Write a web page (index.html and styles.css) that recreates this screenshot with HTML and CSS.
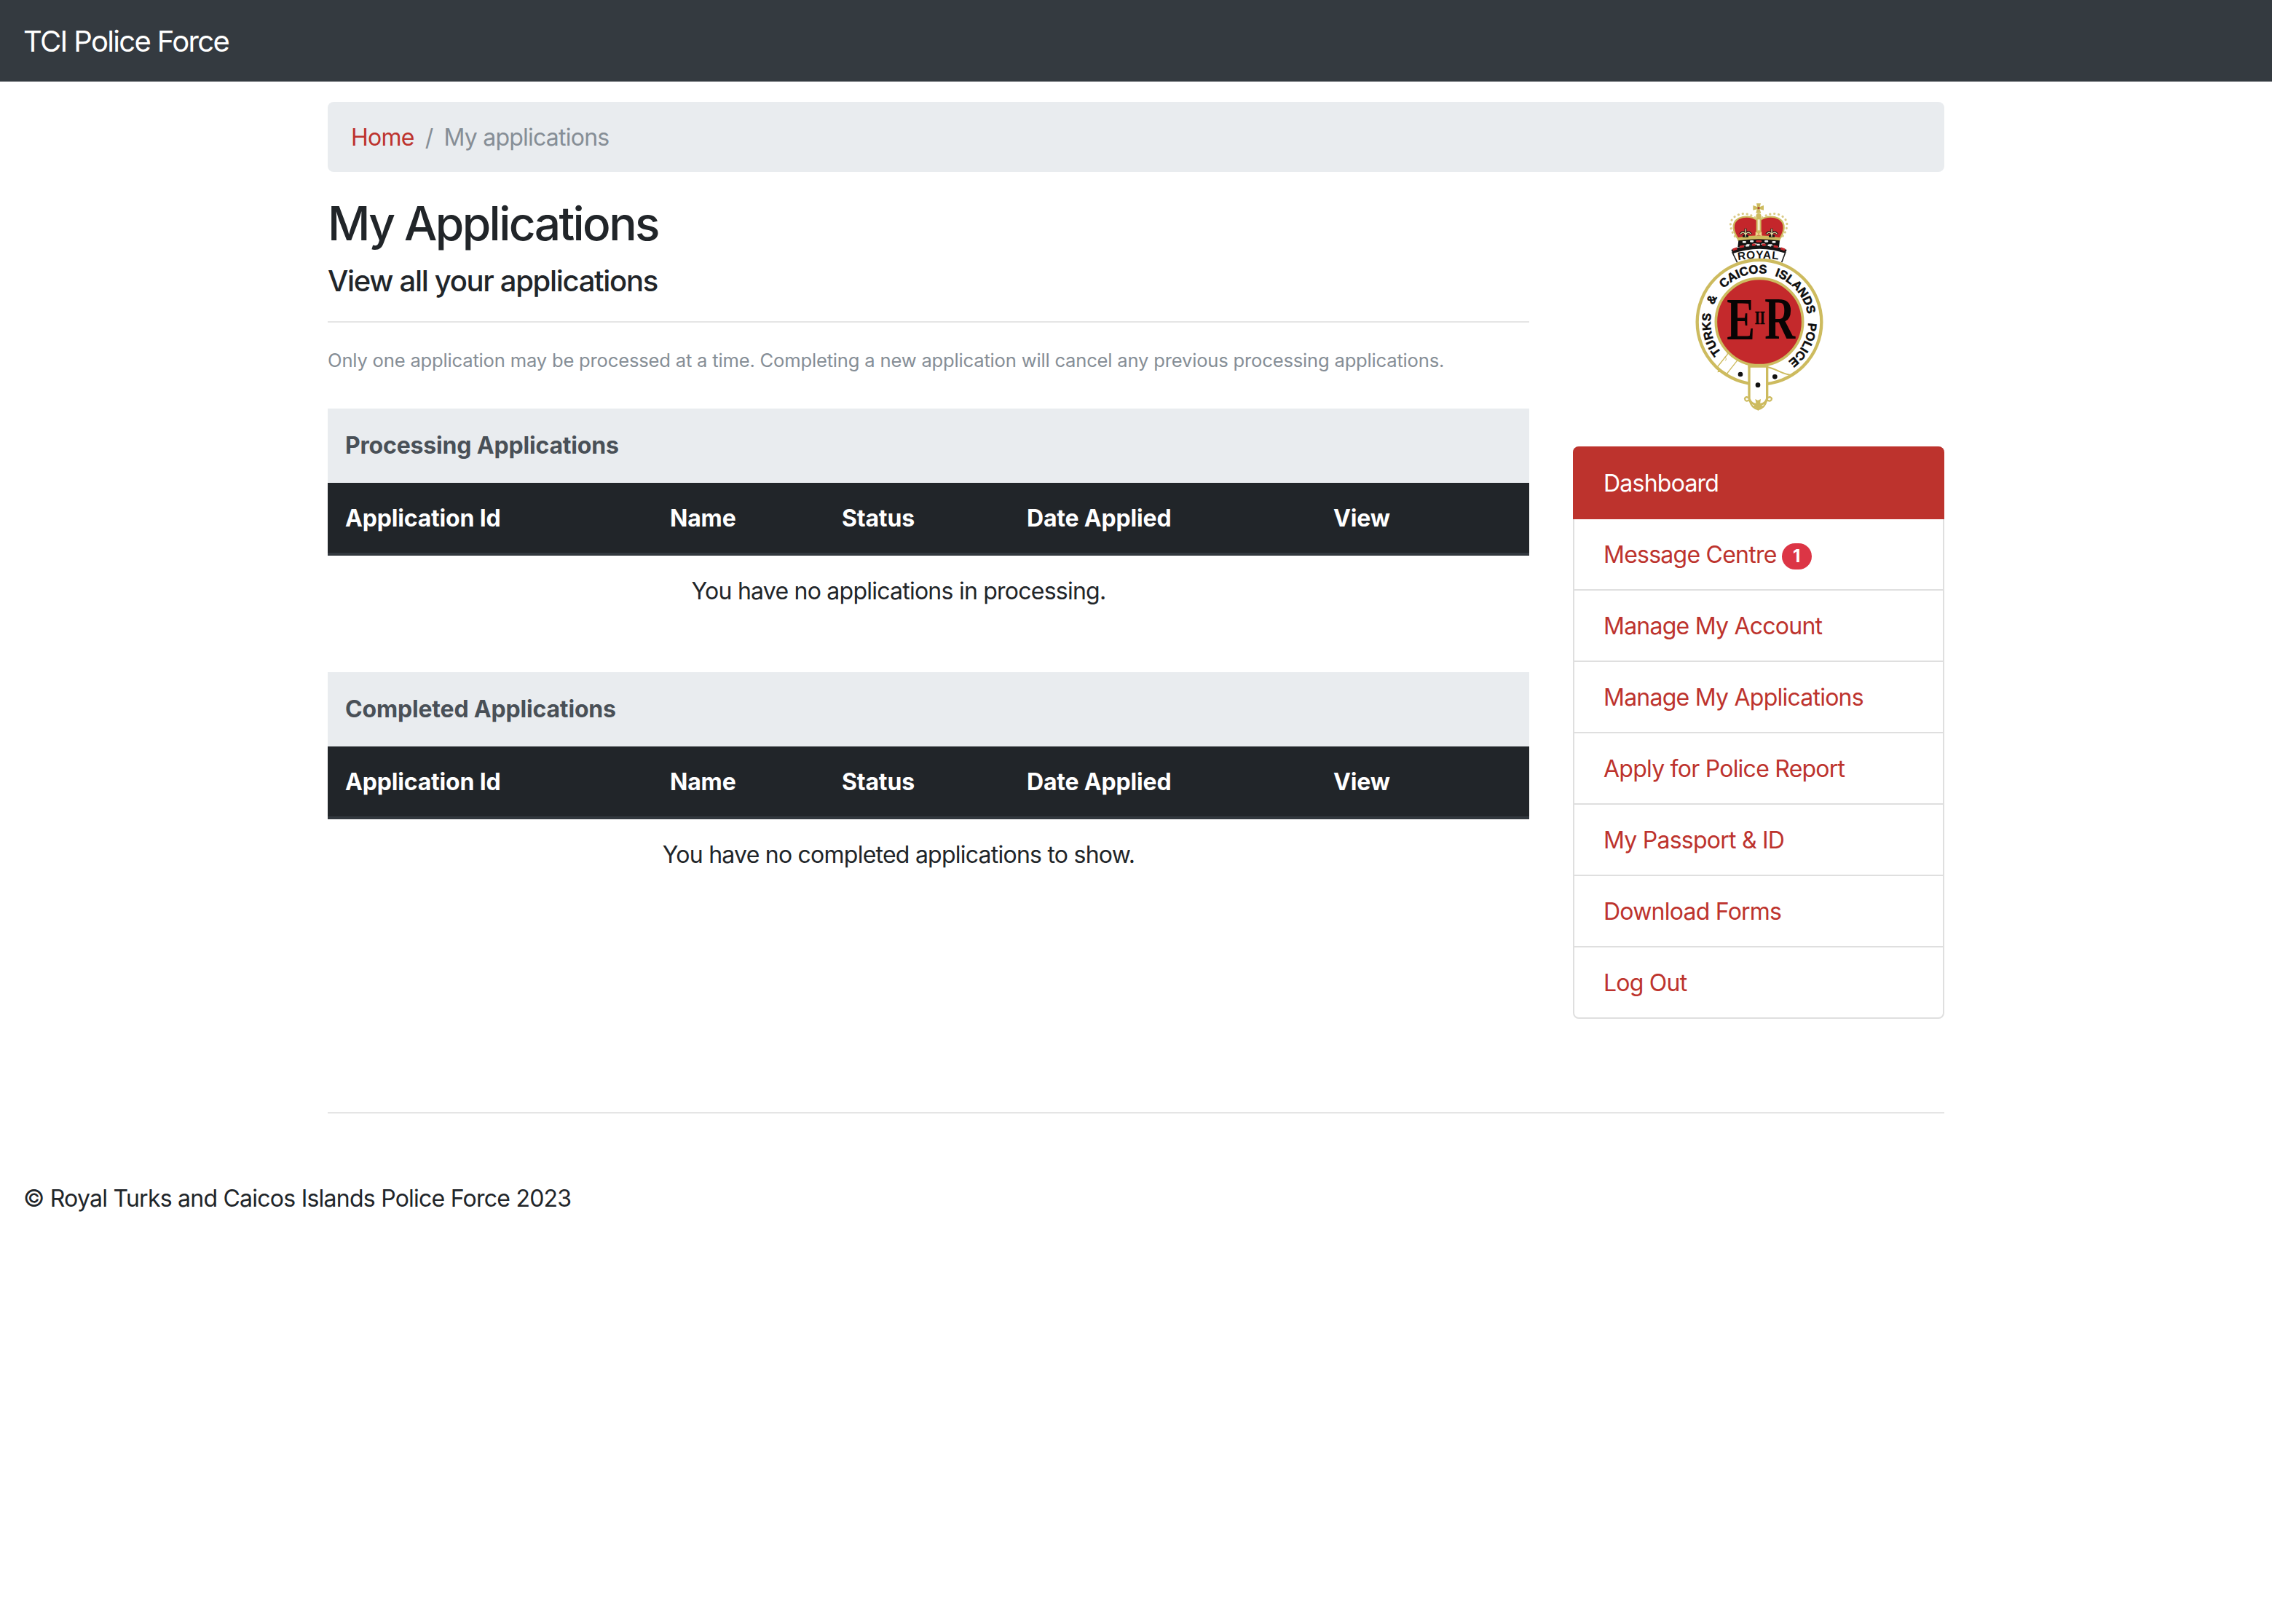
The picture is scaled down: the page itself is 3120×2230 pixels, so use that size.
FILE: index.html
```html
<!DOCTYPE html>
<html lang="en">
<head>
<meta charset="utf-8">
<title>My Applications</title>
<link rel="stylesheet" href="styles.css">
</head>
<body>
<nav class="navbar"><a class="brand">TCI Police Force</a></nav>
<div class="container">
  <ol class="breadcrumb">
    <li><a class="link">Home</a></li>
    <li class="active">My applications</li>
  </ol>
  <div class="row">
    <main class="content">
      <h1>My Applications</h1>
      <h5>View all your applications</h5>
      <hr class="rule">
      <p class="note">Only one application may be processed at a time. Completing a new application will cancel any previous processing applications.</p>
      <table class="table">
        <colgroup><col class="c-id"><col class="c-name"><col class="c-status"><col class="c-date"><col class="c-view"><col></colgroup>
        <thead>
          <tr class="caption"><th colspan="6">Processing Applications</th></tr>
          <tr class="heads"><th>Application Id</th><th>Name</th><th>Status</th><th>Date Applied</th><th>View</th><th></th></tr>
        </thead>
        <tbody><tr><td colspan="5">You have no applications in processing.</td></tr></tbody>
      </table>
      <table class="table">
        <colgroup><col class="c-id"><col class="c-name"><col class="c-status"><col class="c-date"><col class="c-view"><col></colgroup>
        <thead>
          <tr class="caption"><th colspan="6">Completed Applications</th></tr>
          <tr class="heads"><th>Application Id</th><th>Name</th><th>Status</th><th>Date Applied</th><th>View</th><th></th></tr>
        </thead>
        <tbody><tr><td colspan="5">You have no completed applications to show.</td></tr></tbody>
      </table>
    </main>
    <aside class="sidebar">
      <svg class="crest" viewBox="0 24 690 936" role="img" aria-label="Police crest">
        <defs>
          <path id="ring" d="M348 748A201 201 0 0 1 348 346A201 201 0 0 1 348 748"/>
          <path id="ribbon" d="M260 292Q348 278 440 292"/>
        </defs>
        <!-- crown -->
        <g fill="#cdbb5f">
          <path d="M336 58h18l-4 14 16-6v20l-16-4 5 16h-21l4-16-16 4V66l17 6z"/>
          <circle cx="345" cy="110" r="11"/>
        </g>
        <circle cx="345" cy="77" r="5" fill="#a8442f"/>
        <path d="M345 130Q305 102 263 120C230 138 240 178 264 209H428C452 178 460 138 427 120Q386 102 345 130Z" fill="#c4262b" stroke="#cdbb5f" stroke-width="7"/>
        <path d="M345 128Q300 88 258 106C216 126 226 164 250 198M345 128Q390 88 434 106C474 126 466 164 441 198" fill="none" stroke="#d9cb86" stroke-width="9" stroke-linecap="round" stroke-dasharray="1 17"/>
        <path d="M335 118h21v64h-21z" fill="#cdbb5f"/>
        <path d="M341 124h9v45h-9z" fill="#f3edcc"/>
        <path d="M259 199Q345 180 433 199V213Q345 196 259 213Z" fill="#cdbb5f"/>
        <g id="lily">
          <path d="M291 197V161M291 187Q282 167 269 185M291 187Q302 167 314 185M279 193H303" fill="none" stroke="#151515" stroke-width="9"/>
          <path d="M291 195V163M291 187Q282 169 270 184M291 187Q302 169 313 184" fill="none" stroke="#efe2a7" stroke-width="4"/>
        </g>
        <use href="#lily" x="108"/>
        <path d="M332 175l13 8 13-8v18l-13-6-13 6z" fill="#efd58b"/>
        <path d="M262 211Q345 200 432 211L429 238Q345 222 259 238Z" fill="#111"/>
        <g stroke-linecap="round" fill="none" stroke-width="8">
          <path d="M282 217h8M313 214h8M373 214h8M404 217h8M298 230h7M326 227h8M360 227h8M390 230h8" stroke="#eee"/>
          <path d="M338 214h16" stroke="#c4262b"/>
        </g>
        <path d="M232 249Q345 205 461 249L441 302H257Z" fill="#fff"/>
        <path d="M232 249Q345 205 461 249L455 263Q345 226 239 265Z" fill="#151515"/>
        <path d="M239 249l17-6M267 238l18-4M318 229l14-1M360 228l14 1M407 234l18 4M436 243l17 6" stroke="#c4262b" stroke-width="9"/>
        <path d="M292 233l14-2M338 228h12M383 230l14 3" stroke="#eee" stroke-width="7"/>
        <path d="M236 258L257 301M456 258L440 301" stroke="#222" stroke-width="5"/>
        <text class="crest-royal"><textPath href="#ribbon">ROYAL</textPath></text>
        <!-- garter -->
        <circle cx="348" cy="547" r="256" fill="#fff" stroke="#cdbb5f" stroke-width="13"/>
        <circle cx="348" cy="546" r="179" fill="#c4292c" stroke="#cdbb5f" stroke-width="11"/>
        <g class="crest-ring">
          <text><textPath href="#ring" startOffset="179">TURKS</textPath></text>
          <text><textPath href="#ring" startOffset="387">&amp;</textPath></text>
          <text><textPath href="#ring" startOffset="467">CAICOS</textPath></text>
          <text><textPath href="#ring" startOffset="695">ISLANDS</textPath></text>
          <text><textPath href="#ring" startOffset="949">POLICE</textPath></text>
        </g>
        <g class="crest-cypher">
          <text x="214" y="617" textLength="116" lengthAdjust="spacingAndGlyphs">E</text>
          <text x="370" y="614" textLength="126" lengthAdjust="spacingAndGlyphs">R</text>
          <text class="crest-ii" x="329" y="555" textLength="42" lengthAdjust="spacingAndGlyphs">II</text>
        </g>
        <!-- buckle and strap -->
        <g fill="none" stroke="#cdbb5f" stroke-width="4">
          <path d="M218 678L170 738M258 704L212 762M214 674Q240 680 258 704" />
          <path d="M168 738Q186 736 180 750Q198 748 206 764" stroke-width="6"/>
          <path d="M204 690q12 6 4 16" stroke-width="3"/>
          <path d="M384 733C420 740 445 765 486 766" stroke-width="6"/>
        </g>
        <path d="M306 728H380V862Q374 884 350 886H336Q312 884 306 862Z" fill="#fff" stroke="#cdbb5f" stroke-width="10"/>
        <path d="M302 727H384" stroke="#cdbb5f" stroke-width="14"/>
        <path d="M308 868Q290 878 288 862Q291 852 302 858M378 868Q397 878 399 862Q395 852 384 858M308 870Q316 902 343 906Q370 902 378 870" fill="none" stroke="#cdbb5f" stroke-width="7"/>
        <path d="M331 864l11 5 12-5-3 20 12 8-20 20-20-20 12-8z" fill="#cdbb5f"/>
        <g fill="#111"><circle cx="270" cy="762" r="10"/><circle cx="342" cy="806" r="10"/><circle cx="412" cy="772" r="10"/></g>
      </svg>
      <div class="list">
        <a class="item current">Dashboard</a>
        <a class="item">Message Centre <span class="badge">1</span></a>
        <a class="item">Manage My Account</a>
        <a class="item">Manage My Applications</a>
        <a class="item">Apply for Police Report</a>
        <a class="item">My Passport &amp; ID</a>
        <a class="item">Download Forms</a>
        <a class="item">Log Out</a>
      </div>
    </aside>
  </div>
  <hr class="rule footer-rule">
</div>
<footer class="footer">© Royal Turks and Caicos Islands Police Force 2023</footer>
</body>
</html>
```
FILE: styles.css
```css
* { box-sizing: border-box; }
body { margin: 0; background: #fff; color: #212529; font: 400 32px/48px Inter, "Liberation Sans", sans-serif; letter-spacing: -0.76px; }
.navbar { height: 112px; padding: 2px 32px 0; display: flex; align-items: center; background: #343a40; }
.brand { color: #fff; font-size: 40px; letter-spacing: -1.65px; }
.container { width: 2280px; margin: 28px auto 0; padding: 0 30px; }
.breadcrumb { display: flex; height: 96px; margin: 0 0 32px; padding: 25px 32px 23px; list-style: none; background: #e9ecef; border-radius: 8px; }
.breadcrumb .active { color: #868e96; }
.breadcrumb .active::before { content: "/"; padding: 0 15px; }
.link { color: #bd332d; }
.row { display: flex; gap: 60px; }
.content { width: 1650px; }
h1 { margin: 0 0 17px; font-size: 64px; line-height: 77px; font-weight: 500; letter-spacing: -2.6px; }
h5 { margin: 0 0 31px; font-size: 40px; line-height: 48px; font-weight: 500; letter-spacing: -1.32px; }
.rule { margin: 0; border: 0; border-top: 2px solid #e5e5e5; }
.note { margin: 28px 0 42px; font-size: 25.6px; color: #868e96; white-space: nowrap; letter-spacing: -0.195px; }
.table { width: 1650px; table-layout: fixed; border-collapse: separate; border-spacing: 0; margin-bottom: 62px; }
.table th, .table td { padding: 0 24px; text-align: left; }
.table th { letter-spacing: -0.18px; }
.c-id { width: 446px; }
.c-name { width: 236px; }
.c-status { width: 254px; }
.c-date { width: 421px; }
.c-view { width: 211px; }
.caption th { height: 102px; background: #e9ecef; color: #495057; }
.heads th { height: 100px; padding-top: 2px; background: #212529; color: #fff; border-bottom: 4px solid #32383e; }
.table td { height: 98px; text-align: center; }
.sidebar { width: 510px; }
.crest { display: block; width: 230px; height: 312px; margin: 0 auto 33px; letter-spacing: 0; }
.crest-royal { font: 700 46px "Liberation Sans", sans-serif; fill: #111; letter-spacing: 2.5px; }
.crest-ring { font: 700 50px "Liberation Sans", sans-serif; fill: #0c0c0c; stroke: #0c0c0c; stroke-width: 1.5px; }
.crest-cypher { font: 700 248px "Liberation Serif", serif; fill: #080404; }
.crest-ii { font-size: 76px; stroke: #080404; stroke-width: 2px; }
.list { display: flex; flex-direction: column; border: 2px solid #dfdfdf; border-radius: 8px; }
.item { height: 98px; padding: 25px 40px 23px; color: #bd332d; border-bottom: 2px solid #dfdfdf; }
.item:last-child { height: 96px; border-bottom: 0; }
.item.current { height: 100px; margin: -2px -2px 0; padding: 27px 42px 0; color: #fff; background: #bd332d; border: 0; border-radius: 8px 8px 0 0; }
.badge { display: inline-block; min-width: 41px; margin-left: -1px; padding: 6px 0; border-radius: 20px; background: #dc3545; color: #fff; font-size: 24px; line-height: 24px; font-weight: 700; text-align: center; letter-spacing: 0; vertical-align: 1px; }
.footer-rule { margin-top: 128px; }
.footer { margin-top: 93px; padding: 0 32px; }
```
